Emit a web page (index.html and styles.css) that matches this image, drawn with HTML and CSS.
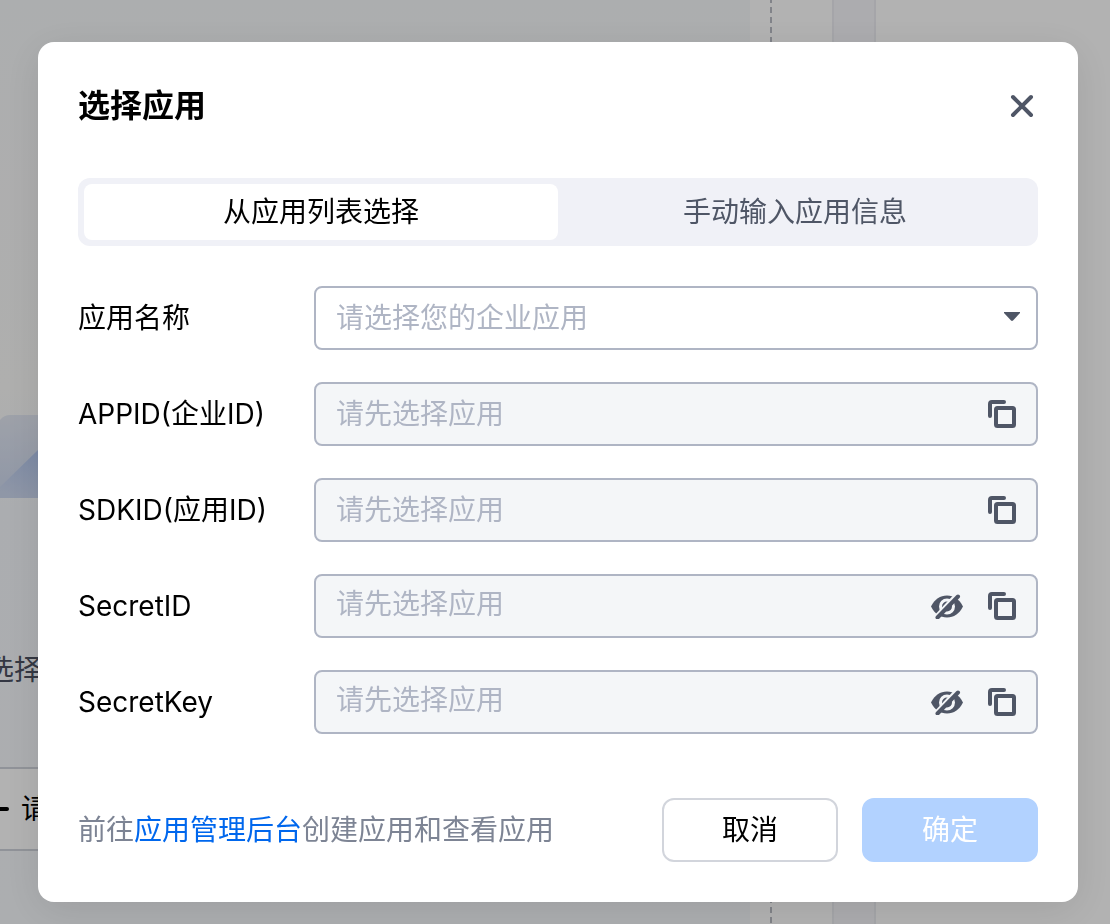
FILE: index.html
```html
<!DOCTYPE html>
<html lang="zh-CN">
<head>
    <meta charset="UTF-8">
    <meta name="viewport" content="width=device-width, initial-scale=1.0">
    <title>选择应用</title>
    <link rel="stylesheet" href="styles.css">
</head>
<body>
    <svg class="sprite" aria-hidden="true">
        <symbol id="icon-copy" viewBox="0 0 28 28">
            <path d="M2 16V4a2 2 0 0 1 2-2h12" fill="none" stroke="currentColor" stroke-width="4" stroke-linecap="round"/>
            <rect x="8" y="8" width="18" height="18" rx="1.500" fill="none" stroke="currentColor" stroke-width="4"/>
        </symbol>
        <symbol id="icon-eye-off" viewBox="0 0 32 26">
            <path d="M0 13.500C4 6 9 2.500 16 2.500s12 3.500 16 11c-4 7.500-9 11-16 11s-12-3.500-16-11z" fill="currentColor"/>
            <circle cx="16" cy="13.500" r="6.500" fill="none" stroke="#f4f6f8" stroke-width="3"/>
            <path d="M3.500 24.500L25 1.500" stroke="#f4f6f8" stroke-width="3"/>
            <path d="M6.500 24.500L27 3.500" stroke="currentColor" stroke-width="4" stroke-linecap="round"/>
        </symbol>
    </svg>

    <div class="page">
        <main class="canvas">
            <svg class="picture" viewBox="0 0 120 83" aria-hidden="true">
                <defs>
                    <linearGradient id="panel" x1="0" y1="0" x2="0" y2="1">
                        <stop offset="0" stop-color="#e3e8f3"/>
                        <stop offset="1" stop-color="#cdd8ef"/>
                    </linearGradient>
                    <linearGradient id="hill" gradientUnits="userSpaceOnUse" x1="38" y1="35" x2="20" y2="83">
                        <stop offset="0" stop-color="#b2c6ee"/>
                        <stop offset="1" stop-color="#cdd8ef"/>
                    </linearGradient>
                </defs>
                <path d="M0 5Q4 0 10 0H120V83H0z" fill="url(#panel)"/>
                <path d="M0 72L38 35L74 0H120V83H0z" fill="url(#hill)"/>
            </svg>
            <p class="canvas-tip">选择</p>
            <button class="canvas-button" type="button">
                <svg width="24" height="24" viewBox="0 0 24 24" aria-hidden="true">
                    <path d="M2 12H22M12 2V22" stroke="currentColor" stroke-width="4" stroke-linecap="round"/>
                </svg>
                请
            </button>
        </main>
        <div class="ruler"></div>
        <div class="gutter"></div>
        <aside class="side"></aside>
    </div>

    <div class="overlay">
        <section class="modal" role="dialog" aria-labelledby="modal-title">
            <header class="modal-header">
                <h1 id="modal-title">选择应用</h1>
                <button class="icon-button close" type="button" aria-label="关闭">
                    <svg width="24" height="24" viewBox="0 0 24 24">
                        <path d="M3 3L21 21M21 3L3 21" stroke="currentColor" stroke-width="4" stroke-linecap="round"/>
                    </svg>
                </button>
            </header>

            <div class="tabs" role="tablist">
                <button class="tab active" type="button" role="tab" aria-selected="true">从应用列表选择</button>
                <button class="tab" type="button" role="tab" aria-selected="false">手动输入应用信息</button>
            </div>

            <form class="form">
                <div class="row">
                    <label for="app-name">应用名称</label>
                    <div class="field select">
                        <select id="app-name">
                            <option value="">请选择您的企业应用</option>
                        </select>
                        <svg class="caret" width="16" height="9" viewBox="0 0 16 9" aria-hidden="true">
                            <path d="M0 0H16V1L9 8.500Q8 9.300 7 8.500L0 1z" fill="currentColor"/>
                        </svg>
                    </div>
                </div>
                <div class="row">
                    <label for="app-id">APPID(企业ID)</label>
                    <div class="field disabled">
                        <input id="app-id" type="text" placeholder="请先选择应用" disabled>
                        <button class="icon-button" type="button" aria-label="复制"><svg width="28" height="28"><use href="#icon-copy"/></svg></button>
                    </div>
                </div>
                <div class="row">
                    <label for="sdk-id">SDKID(应用ID)</label>
                    <div class="field disabled">
                        <input id="sdk-id" type="text" placeholder="请先选择应用" disabled>
                        <button class="icon-button" type="button" aria-label="复制"><svg width="28" height="28"><use href="#icon-copy"/></svg></button>
                    </div>
                </div>
                <div class="row">
                    <label for="secret-id">SecretID</label>
                    <div class="field disabled secret">
                        <input id="secret-id" type="password" placeholder="请先选择应用" disabled>
                        <button class="icon-button" type="button" aria-label="显示"><svg width="32" height="26"><use href="#icon-eye-off"/></svg></button>
                        <button class="icon-button" type="button" aria-label="复制"><svg width="28" height="28"><use href="#icon-copy"/></svg></button>
                    </div>
                </div>
                <div class="row">
                    <label for="secret-key">SecretKey</label>
                    <div class="field disabled secret">
                        <input id="secret-key" type="password" placeholder="请先选择应用" disabled>
                        <button class="icon-button" type="button" aria-label="显示"><svg width="32" height="26"><use href="#icon-eye-off"/></svg></button>
                        <button class="icon-button" type="button" aria-label="复制"><svg width="28" height="28"><use href="#icon-copy"/></svg></button>
                    </div>
                </div>
            </form>

            <footer class="modal-footer">
                <p>前往<a href="#">应用管理后台</a>创建应用和查看应用</p>
                <button class="btn" type="button">取消</button>
                <button class="btn primary" type="button" disabled>确定</button>
            </footer>
        </section>
    </div>
</body>
</html>
```

FILE: styles.css
```css
* {
    box-sizing: border-box;
}

body {
    margin: 0;
    color: #000000;
    font-family: Inter, "Noto Sans CJK SC", sans-serif;
    font-size: 28px;
    line-height: 40px;
}

button,
input,
select {
    font: inherit;
    color: inherit;
}

button {
    padding: 0;
    border: none;
    background: none;
    cursor: pointer;
}

h1,
p {
    margin: 0;
}

/* Clipped instead of display: none so the symbols keep rendering */
.sprite {
    position: absolute;
    width: 0;
    height: 0;
}

/* Page behind the dialog */
.page {
    display: flex;
    height: 100vh;
    overflow: hidden;
    background-color: #ffffff;
}

.canvas {
    flex: 1;
    display: flex;
    flex-direction: column;
    align-items: flex-start;
    padding-top: 415px;
    overflow: hidden;
    background: linear-gradient(180deg, #f7f9fb 0%, #fbfbfa 42%, #f5f8fc 55%, #f7f9fc 100%);
}

.picture {
    flex: none;
    width: 120px;
    height: 83px;
}

.canvas-tip {
    margin: 152px 0 0 -14px;
    color: #4b5060;
}

.canvas-button {
    flex: none;
    display: flex;
    align-items: center;
    gap: 12px;
    height: 84px;
    margin: 77px 0 0 -41px;
    padding: 0 24px;
    border: 2px solid #cfd3db;
    background-color: #ffffff;
}

.ruler {
    width: 84px;
    border-right: 2px solid #ecedf2;
    background: linear-gradient(180deg, #b9bcc4 6px, transparent 6px) 20px 7px / 2px 10px repeat-y;
}

.gutter {
    width: 42px;
    border-right: 2px solid #ecedf2;
    background-color: #f7f7fb;
}

.side {
    width: 234px;
}

/* Dialog */
.overlay {
    position: fixed;
    inset: 0;
    padding: 42px 32px 22px 38px;
    background-color: rgba(0, 0, 0, 0.3);
    overflow: auto;
}

.modal {
    padding: 40px;
    border-radius: 16px;
    background-color: #ffffff;
    box-shadow: 0 8px 40px rgba(0, 0, 0, 0.1);
}

.modal-header {
    display: flex;
    justify-content: space-between;
    align-items: center;
    margin-bottom: 48px;
}

.modal-header h1 {
    font-size: 32px;
    font-weight: 700;
    line-height: 48px;
}

.icon-button {
    display: flex;
    color: #4f5666;
}

.close {
    padding: 4px;
}

.tabs {
    display: grid;
    grid-template-columns: 1fr 1fr;
    padding: 6px;
    border-radius: 12px;
    background-color: #f0f1f7;
}

.tab {
    height: 56px;
    border-radius: 8px;
    color: #4f5666;
}

.tab.active {
    background-color: #ffffff;
    color: #000000;
}

.form {
    display: grid;
    gap: 32px;
    margin: 40px 0 64px;
}

.row {
    display: grid;
    grid-template-columns: 236px 1fr;
    align-items: center;
}

.field {
    position: relative;
    display: flex;
    align-items: center;
    gap: 25px;
    height: 64px;
    padding: 0 20px;
    border: 2px solid #afb5c4;
    border-radius: 8px;
    color: #afb5c4;
}

.field input,
.field select {
    flex: 1;
    min-width: 0;
    height: 60px;
    padding: 0;
    border: none;
    outline: none;
    background: none;
}

.field select {
    appearance: none;
}

.field input::placeholder {
    color: #afb5c4;
    opacity: 1;
}

.field.disabled {
    background-color: #f4f6f8;
}

.field.secret input {
    padding-bottom: 4px;
}

.caret {
    position: absolute;
    top: 24px;
    right: 16px;
    color: #4f5666;
    pointer-events: none;
}

.modal-footer {
    display: flex;
    align-items: center;
    gap: 24px;
}

.modal-footer p {
    flex: 1;
    color: #7d8494;
}

.modal-footer a {
    color: #0067ed;
    text-decoration: none;
}

.btn {
    width: 176px;
    height: 64px;
    border: 2px solid #d2d5dc;
    border-radius: 12px;
}

.btn.primary {
    border-color: #b2d2ff;
    background-color: #b2d2ff;
    color: #ffffff;
    cursor: default;
}
```
